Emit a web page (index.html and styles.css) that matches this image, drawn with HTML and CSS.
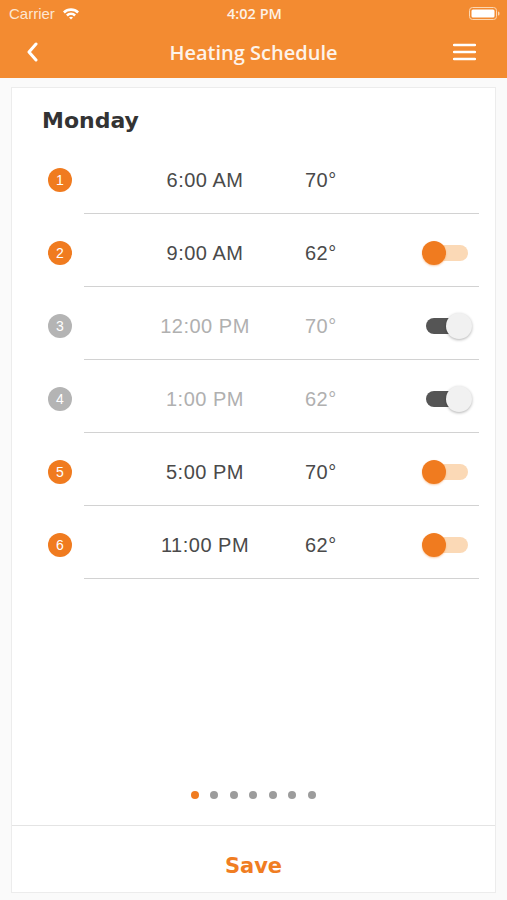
FILE: index.html
```html
<!DOCTYPE html>
<html lang="en">
<head>
    <meta charset="UTF-8">
    <meta name="viewport" content="width=device-width, initial-scale=1.0">
    <title>Heating Schedule</title>
    <link rel="stylesheet" href="styles.css">
</head>
<body>

    <!-- Header: status bar + nav -->
    <header class="header">
        <div class="status-bar">
            <div class="status-left">
                <span class="carrier">Carrier</span>
                <svg class="wifi" width="18" height="13" viewBox="0 0 18 13">
                    <path d="M1 4.6 A11.5 11.5 0 0 1 17 4.6 L15.2 6.4 A9 9 0 0 0 2.8 6.4 Z" fill="#fff"/>
                    <path d="M4 7.6 A7.2 7.2 0 0 1 14 7.6 L12.2 9.4 A4.7 4.7 0 0 0 5.8 9.4 Z" fill="#fff"/>
                    <path d="M7 10.6 A2.9 2.9 0 0 1 11 10.6 L9 12.6 Z" fill="#fff"/>
                </svg>
            </div>
            <span class="clock">4:02 PM</span>
            <div class="status-right">
                <svg class="battery" width="31" height="13" viewBox="0 0 31 13">
                    <rect x="0.5" y="0.5" width="27" height="12" rx="3" fill="none" stroke="#fbd7b3" stroke-width="1"/>
                    <rect x="2.5" y="2.5" width="23" height="8" rx="1.5" fill="#fff"/>
                    <path d="M29 4.5 a1.5 1.5 0 0 1 1.5 1.5 v1 a1.5 1.5 0 0 1 -1.5 1.5 Z" fill="#fbd7b3"/>
                </svg>
            </div>
        </div>
        <nav class="nav">
            <svg class="back" width="12" height="20" viewBox="0 0 12 20">
                <path d="M10 2 L3 10 L10 18" fill="none" stroke="#fff" stroke-width="3" stroke-linecap="round" stroke-linejoin="round"/>
            </svg>
            <h1 class="nav-title">Heating Schedule</h1>
            <svg class="menu" width="23" height="18" viewBox="0 0 23 18">
                <path d="M1 2 H22 M1 9 H22 M1 16 H22" stroke="#fff" stroke-width="2.4" stroke-linecap="round"/>
            </svg>
        </nav>
    </header>

    <!-- Schedule card -->
    <div class="card">
        <h2 class="day">Monday</h2>

        <div class="list">
            <div class="row">
                <div class="num-cell"><span class="num">1</span></div>
                <div class="row-main">
                    <span class="time">6:00 AM</span>
                    <span class="temp">70°</span>
                </div>
            </div>
            <div class="row">
                <div class="num-cell"><span class="num">2</span></div>
                <div class="row-main">
                    <span class="time">9:00 AM</span>
                    <span class="temp">62°</span>
                    <span class="toggle on"><span class="thumb"></span></span>
                </div>
            </div>
            <div class="row off">
                <div class="num-cell"><span class="num">3</span></div>
                <div class="row-main">
                    <span class="time">12:00 PM</span>
                    <span class="temp">70°</span>
                    <span class="toggle"><span class="thumb"></span></span>
                </div>
            </div>
            <div class="row off">
                <div class="num-cell"><span class="num">4</span></div>
                <div class="row-main">
                    <span class="time">1:00 PM</span>
                    <span class="temp">62°</span>
                    <span class="toggle"><span class="thumb"></span></span>
                </div>
            </div>
            <div class="row">
                <div class="num-cell"><span class="num">5</span></div>
                <div class="row-main">
                    <span class="time">5:00 PM</span>
                    <span class="temp">70°</span>
                    <span class="toggle on"><span class="thumb"></span></span>
                </div>
            </div>
            <div class="row">
                <div class="num-cell"><span class="num">6</span></div>
                <div class="row-main">
                    <span class="time">11:00 PM</span>
                    <span class="temp">62°</span>
                    <span class="toggle on"><span class="thumb"></span></span>
                </div>
            </div>
        </div>

        <!-- Page dots, one per day -->
        <div class="dots">
            <span class="dot active"></span>
            <span class="dot"></span>
            <span class="dot"></span>
            <span class="dot"></span>
            <span class="dot"></span>
            <span class="dot"></span>
            <span class="dot"></span>
        </div>

        <div class="card-footer">
            <button class="save-btn">Save</button>
        </div>
    </div>

</body>
</html>
```

FILE: styles.css
```css
/* Basic Page Styling */
body {
    margin: 0;
    padding: 0;
    background-color: #fafafa;
    font-family: "Liberation Sans", Arial, sans-serif;
}
/* Header */
.header {
    background-color: #f38b31;
    color: white;
}
.status-bar {
    height: 26px;
    display: flex;
    align-items: center;
    justify-content: space-between;
    padding: 0 7px 0 9px;
}
.status-left,
.status-right {
    width: 120px;
    display: flex;
    align-items: center;
}
.status-right {
    justify-content: flex-end;
}
.carrier {
    font-size: 15px;
    color: #fde6d2;
}
.wifi {
    margin-left: 7px;
}
.clock {
    font-family: "Open Sans", sans-serif;
    font-size: 14.5px;
    font-weight: 600;
    color: #fdf1e6;
}
.nav {
    height: 52px;
    display: grid;
    grid-template-columns: 1fr auto 1fr;
    align-items: center;
    padding: 0 26px;
}
.menu {
    justify-self: end;
    margin-right: 5px;
}
.nav-title {
    margin: 0;
    font-family: "Open Sans", sans-serif;
    font-size: 20px;
    font-weight: 600;
    color: #fdf3ea;
}
/* Schedule Card */
.card {
    margin: 9px 11px 0 11px;
    height: 806px;
    box-sizing: border-box;
    background-color: white;
    border: 1px solid #ececec;
    display: flex;
    flex-direction: column;
}
.day {
    margin: 0 0 5px 0;
    padding: 18px 30px 0 30px;
    font-family: "DejaVu Sans", Verdana, sans-serif;
    font-size: 22px;
    line-height: 30px;
    font-weight: bold;
    color: #333;
}
.row {
    display: flex;
    height: 73px;
}
.num-cell {
    width: 72px;
    box-sizing: border-box;
    padding: 5px 0 0 36px;
    display: flex;
    align-items: center;
}
.num {
    width: 24px;
    height: 24px;
    border-radius: 50%;
    background-color: #f07b1f;
    color: white;
    font-size: 14px;
    line-height: 24px;
    text-align: center;
}
.row-main {
    flex: 1;
    margin-right: 16px;
    box-sizing: border-box;
    border-bottom: 1px solid #d2d2d2;
    display: flex;
    align-items: center;
    padding: 6px 11px 0 0;
}
.time {
    width: 160px;
    margin-left: 41px;
    text-align: center;
    font-size: 20px;
    letter-spacing: 0.5px;
    color: #4a4a4a;
}
.temp {
    margin-left: 20px;
    font-size: 20px;
    letter-spacing: 0.5px;
    color: #4a4a4a;
}
.row.off .num {
    background-color: #b4b4b4;
}
.row.off .time,
.row.off .temp {
    color: #b0b0b0;
}
/* Toggle Switch */
.toggle {
    margin-left: auto;
    position: relative;
    width: 42px;
    height: 16px;
    border-radius: 8px;
    background-color: #555;
}
.toggle .thumb {
    position: absolute;
    top: -5px;
    right: -4px;
    width: 26px;
    height: 26px;
    border-radius: 50%;
    background-color: #f1f1f1;
    box-shadow: 0 1px 3px rgba(0, 0, 0, 0.3);
}
.toggle.on {
    background-color: #fbd9b6;
}
.toggle.on .thumb {
    right: auto;
    left: -4px;
    top: -4px;
    width: 24px;
    height: 24px;
    background-color: #f07b1f;
    box-shadow: 0 1px 2px rgba(240, 123, 31, 0.4);
}
/* Page Dots */
.dots {
    margin-top: auto;
    margin-bottom: 26px;
    display: flex;
    justify-content: center;
    gap: 11.5px;
    padding-right: 1px;
}
.dot {
    width: 8px;
    height: 8px;
    border-radius: 50%;
    background-color: #9c9c9c;
}
.dot.active {
    background-color: #f07b1f;
}
/* Save Button */
.card-footer {
    height: 67px;
    box-sizing: border-box;
    border-top: 1px solid #e4e4e4;
    padding-top: 28px;
    text-align: center;
}
.save-btn {
    background: none;
    border: none;
    padding: 0;
    font-family: "DejaVu Sans", Verdana, sans-serif;
    font-size: 21px;
    line-height: 24px;
    font-weight: bold;
    color: #f07d22;
    cursor: pointer;
}
```
